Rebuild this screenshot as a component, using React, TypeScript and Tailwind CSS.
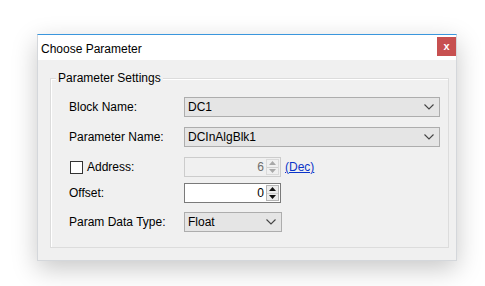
const font = { fontFamily: '"Liberation Sans", Arial, sans-serif' };

function Chevron({ className = "" }: { className?: string }) {
  return (
    <svg width="10" height="6" viewBox="0 0 10 6" className={className}>
      <path d="M0.5 0.5 L5 5 L9.5 0.5" fill="none" stroke="currentColor" strokeWidth="1.1" />
    </svg>
  );
}

function Combo({ value, width }: { value: string; width: string }) {
  return (
    <div
      className={`${width} flex h-[20px] items-center justify-between border border-[#adadad] bg-[#e5e5e5] pl-[3px] pr-[5px] text-[12px] text-black`}
    >
      <span>{value}</span>
      <Chevron className="text-[#444]" />
    </div>
  );
}

function Spin({ value, disabled }: { value: string; disabled?: boolean }) {
  const arrow = disabled ? "#a8a8a8" : "#111";
  return (
    <div
      className={`flex h-[20px] w-[97px] items-center border ${
        disabled ? "border-[#cccccc] bg-[#f0f0f0] text-[#6d6d6d]" : "border-[#7a7a7a] bg-white text-black"
      } text-[12px]`}
    >
      <span className="flex-1 pr-[2px] text-right">{value}</span>
      <div
        className={`mr-[1px] flex h-[16px] w-[13px] flex-col border ${
          disabled ? "border-[#dadada] bg-[#f0f0f0]" : "border-[#b5b5b5] bg-[#ececec]"
        }`}
      >
        <div className="flex flex-1 items-center justify-center border-b border-[#d0d0d0]">
          <svg width="7" height="4" viewBox="0 0 7 4">
            <path d="M0 4 L3.5 0 L7 4 Z" fill={arrow} />
          </svg>
        </div>
        <div className="flex flex-1 items-center justify-center">
          <svg width="7" height="4" viewBox="0 0 7 4">
            <path d="M0 0 L3.5 4 L7 0 Z" fill={arrow} />
          </svg>
        </div>
      </div>
    </div>
  );
}

export default function App() {
  return (
    <div className="h-[286px] w-[485px] bg-white pl-[37px] pt-[34px]" style={font}>
      <div className="flex h-[227px] w-[420px] flex-col border border-[#d4d7db] border-t-[#3a96dd] bg-[#f0f0f0] shadow-[0_8px_24px_rgba(0,0,0,0.22)]">
        {/* title bar */}
        <div className="flex h-[25px] items-start justify-between bg-white">
          <span className="pl-[3px] pt-[5px] text-[12px] text-black">Choose Parameter</span>
          <div className="mt-[2px] flex h-[19px] w-[19px] items-center justify-center bg-[#c75050] text-[11px] font-bold leading-none text-white">
            x
          </div>
        </div>

        {/* body */}
        <div className="pl-[12px] pr-[7px] pt-[18px]">
          <div className="relative h-[170px] border border-[#dcdcdc] pl-[18px] pr-[8px] pt-[18px] shadow-[inset_1px_1px_0_#ffffff]">
            <span className="absolute left-[5px] top-[-8px] bg-[#f0f0f0] px-[2px] text-[12px] leading-[14px] text-black">
              Parameter Settings
            </span>
            <div className="flex flex-col text-[12px] text-black">
              <div className="flex h-[20px] items-center">
                <span className="w-[115px]">Block Name:</span>
                <Combo value="DC1" width="w-[256px]" />
              </div>
              <div className="mt-[10px] flex h-[20px] items-center">
                <span className="w-[115px]">Parameter Name:</span>
                <Combo value="DCInAlgBlk1" width="w-[256px]" />
              </div>
              <div className="mt-[10px] flex h-[20px] items-center">
                <div className="flex w-[115px] items-center">
                  <span className="ml-[1px] h-[13px] w-[13px] border border-[#333333] bg-white" />
                  <span className="ml-[4px]">Address:</span>
                </div>
                <Spin value="6" disabled />
                <span className="ml-[4px] text-[#0b34c9] underline">(Dec)</span>
              </div>
              <div className="mt-[6px] flex h-[20px] items-center">
                <span className="w-[115px]">Offset:</span>
                <Spin value="0" />
              </div>
              <div className="mt-[9px] flex h-[20px] items-center">
                <span className="w-[115px]">Param Data Type:</span>
                <Combo value="Float" width="w-[98px]" />
              </div>
            </div>
          </div>
        </div>
      </div>
    </div>
  );
}
